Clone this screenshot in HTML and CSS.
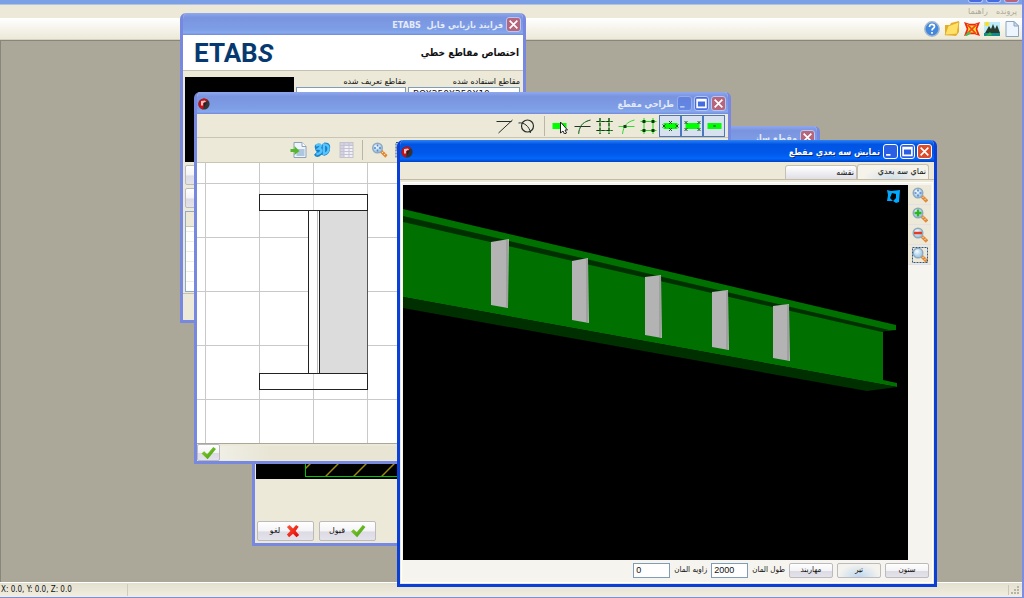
FILE: index.html
```html
<!DOCTYPE html>
<html lang="fa" dir="rtl">
<head>
<meta charset="utf-8">
<title>ETABS</title>
<link rel="stylesheet" href="styles.css">
</head>
<body>
<svg class="sprite" aria-hidden="true">
  <defs>
    <radialGradient id="lens" cx="40%" cy="35%"><stop offset="0" stop-color="#f4fcff"/><stop offset="1" stop-color="#a5cdea"/></radialGradient>
    <linearGradient id="greenTick" x1="0" y1="0" x2="1" y2="1"><stop offset="0" stop-color="#8ed03a"/><stop offset="1" stop-color="#3f9e05"/></linearGradient>
    <linearGradient id="redCross" x1="0" y1="0" x2="1" y2="1"><stop offset="0" stop-color="#ff5a3c"/><stop offset="1" stop-color="#e00000"/></linearGradient>
    <symbol id="app" viewBox="0 0 12 12"><circle cx="6" cy="6" r="5.6" fill="#333"/><path d="M6 .4a5.6 5.6 0 0 0-1 11.100L6 6 10 2A5.600 5.600 0 0 0 6 .4z" fill="#c80f16"/><path d="M3 3v4.500h2V5l3-1-1-1.500z" fill="#fff" opacity=".75"/><path d="M6 4.500h3L6 9z" fill="#222"/></symbol>
    <symbol id="mag" viewBox="0 0 16 16"><path d="M9.500 9l5.500 5.500" stroke="#e08a3a" stroke-width="3.400"/><path d="M10.500 11l1.500-1.500M12.500 13l1.500-1.500" stroke="#ffe0b0"/><circle cx="6" cy="6" r="4.800" fill="url(#lens)" stroke="#8fa9bd" stroke-width="1.400"/></symbol>
    <symbol id="magfit" viewBox="0 0 16 16"><use href="#mag"/><path d="M6 2.500v2M6 7.500v2M2.500 6h2M7.500 6h2" stroke="#5b80cc" stroke-width="1.600"/></symbol>
    <symbol id="magin" viewBox="0 0 16 16"><use href="#mag"/><path d="M6 2.500v7M2.500 6h7" stroke="#2fb61f" stroke-width="2.400"/></symbol>
    <symbol id="magout" viewBox="0 0 16 16"><use href="#mag"/><path d="M2 6h8" stroke="#e8391f" stroke-width="2.400"/></symbol>
    <symbol id="magwin" viewBox="0 0 16 16"><use href="#mag"/><path d="M.5.5h15v15H.5z" fill="none" stroke="#30548c" stroke-dasharray="2 1"/></symbol>
    <symbol id="tick" viewBox="0 0 18 16"><path d="M1 8.500L4 6l3.500 3.500L14.500 1 17.500 3.500 8 15z" fill="url(#greenTick)"/></symbol>
    <symbol id="cross" viewBox="0 0 16 16"><path d="M1 3.500L4 1l4 4 3.500-4 3 2L11 8l4 4.500-3 2.500-4-4-4.500 4L1 12l4-4z" fill="url(#redCross)"/></symbol>
    <symbol id="doc" viewBox="0 0 16 16"><path d="M2 .5h8L14.500 5v10.500H2z" fill="#edf6ff" stroke="#8aa5c2"/><path d="M10 .5V5h4.500z" fill="#c9def2" stroke="#8aa5c2"/></symbol>
    <symbol id="land" viewBox="0 0 16 16"><path d="M0 1h16v14H0z" fill="#bcebf9"/><circle cx="3" cy="3" r="2.300" fill="#ffdf23"/><path d="M1 12L5 5l2 3 2-5 2 5 2-4 3 8z" fill="#293b2e"/><path d="M0 12h16v3H0z" fill="#158a8c"/><path d="M2 15l4-4 2 3z" fill="#32b749"/></symbol>
    <symbol id="mesh" viewBox="0 0 18 16"><path d="M0 0l6 2h6l6-2-3 8 3 8-6-2H6l-6 2 3-8z" fill="#ef2712"/><path d="M3 2l4 2h5l3-2-2 6 2 6-3-2H7l-4 2 2-6z" fill="#ffe32b"/><path d="M4 3l9 10M14 3L4 13" stroke="#ef4b20" stroke-width="2"/><path d="M1 15l4-4 3 2-5 3z" fill="#43bd58"/></symbol>
    <symbol id="folder" viewBox="0 0 16 16"><path d="M1 4h5l1-2 8-2v11l-3 4-11-1z" fill="#e5ad26"/><path d="M1 14L4 5l11-4-2 12z" fill="#ffe168" stroke="#dba929" stroke-width=".7"/></symbol>
    <symbol id="help" viewBox="0 0 16 16"><circle cx="8" cy="8" r="7.200" fill="#4288dc" stroke="#a8b9cc" stroke-width="1.500"/><path d="M5.500 6c0-4 5-3 5-.5C10.500 7.500 8 7 8 9.500M8 11v1.800" fill="none" stroke="#fff" stroke-width="1.700"/></symbol>
    <symbol id="export" viewBox="0 0 16 16"><path d="M3.500.5h8l4 4v11h-12z" fill="#eff5fb" stroke="#8da2b8"/><path d="M6 7h8v7H6z" fill="#afc6df"/><path d="M11.500.5v4h4" fill="#fff" stroke="#8da2b8"/><path d="M0 7h4V4l5 5-5 4v-3H0z" fill="#56b72b"/></symbol>
    <symbol id="three" viewBox="0 0 18 16"><path d="M1 3q4-3 7 0l3-3q7 0 6 6 0 7-6 8l-3-1q-5 5-8 0l3-3Q0 7 1 3z" fill="#1583cc"/><path d="M2 3.500c5-3 7 0 3 3 4 0 4 5-2.500 6M10.500 2v10c6-1 7-10 0-10z" fill="none" stroke="#57c3fa" stroke-width="2.500"/></symbol>
    <symbol id="sheet" viewBox="0 0 16 16"><path d="M1 0h14v16H1z" fill="#c3c1d2"/><path d="M2 1h3v2H2zM6 1h4v2H6zM11 1h3v2h-3zM2 10h3v2H2zM2 4h3v2H2zM2 7h3v2H2zM2 13h3v2H2z" fill="#d4d3df"/><path d="M6 4h4v2H6zM11 4h3v2h-3zM6 7h4v2H6zM11 7h3v2h-3zM6 10h4v2H6zM11 10h3v2h-3zM6 13h4v2H6zM11 13h3v2h-3z" fill="#f1f1f8"/></symbol>
    <symbol id="bar1" viewBox="0 0 16 16"><path d="M1 5h14v6H1z" fill="#0f0"/><path d="M7 7l2 2M9 7L7 9" stroke="#063"/></symbol>
    <symbol id="bar4" viewBox="0 0 16 16"><path d="M1 5h14v6H1z" fill="#0f0"/><path d="M0 3l3 3M3 3L0 6M13 3l3 3M16 3l-3 3M0 10l3 3M3 10l-3 3M13 10l3 3M16 10l-3 3" stroke="#252"/></symbol>
    <symbol id="barm" viewBox="0 0 16 16"><path d="M1 5h14v6H1z" fill="#0f0"/><path d="M0 6.500l3 3M3 6.500l-3 3M13 6.500l3 3M16 6.500l-3 3M6.500 3l3 3M9.500 3l-3 3M6.500 10l3 3M9.500 10l-3 3" stroke="#252"/></symbol>
    <symbol id="gridsnap" viewBox="0 0 16 16"><path d="M3.500 0v16M12.500 0v16M0 3.500h16M0 12.500h16" stroke="#18d918"/><path d="M2 2h3v3H2zM11 2h3v3h-3zM2 11h3v3H2zM11 11h3v3h-3z" fill="#063b06"/></symbol>
    <symbol id="gridline" viewBox="0 0 16 16"><path d="M3.500 0v16M12.500 0v16M0 3.500h16M0 12.500h16" stroke="#18a018"/><path d="M3.500 0v16M12.500 0v16M0 3.500h16M0 12.500h16" stroke="#163016" stroke-dasharray="3 2"/></symbol>
    <symbol id="crosspt" viewBox="0 0 16 16"><path d="M0 8.500h16M4 16C5 8 8 4 16 2" fill="none" stroke="#32d832"/><path d="M5 7h3v3H5z" fill="#173f17"/></symbol>
    <symbol id="curve" viewBox="0 0 16 16"><path d="M0 8.500h16M4 16C5 8 8 4 16 2" fill="none" stroke="#24342a"/><path d="M4 16C5 8 8 4 16 2" fill="none" stroke="#29af29" stroke-dasharray="2 2"/></symbol>
    <symbol id="pick" viewBox="0 0 16 16"><path d="M0 5h14v6H0z" fill="#0f0"/><path d="M8 4v11l2.500-2 1.500 3 2-1-1.500-3H15z" fill="#fff" stroke="#222"/></symbol>
    <symbol id="tangent" viewBox="0 0 16 16"><circle cx="9" cy="8" r="6" fill="none" stroke="#262d29" stroke-width="1.200"/><path d="M0 5c5-1 11 3 12 10" fill="none" stroke="#262d29"/></symbol>
    <symbol id="angle" viewBox="0 0 16 16"><path d="M0 3.500h15M16 2L2 15" fill="none" stroke="#262d29"/></symbol>
  </defs>
</svg>

<div class="app">
  <header class="app-title"><button class="cap close" aria-label="بستن"></button><button class="cap" aria-label="بزرگ"></button><button class="cap" aria-label="کوچک"></button></header>
  <nav class="menu"><button>پرونده</button><button>راهنما</button></nav>
  <div class="main-tools">
    <button aria-label="جدید"><svg><use href="#doc"/></svg></button>
    <button aria-label="نما"><svg><use href="#land"/></svg></button>
    <button aria-label="مش"><svg><use href="#mesh"/></svg></button>
    <button aria-label="باز کردن"><svg><use href="#folder"/></svg></button>
    <button aria-label="کمک"><svg><use href="#help"/></svg></button>
  </div>
  <main class="desk"></main>
  <footer class="status"><span class="coords">X: 0.0, Y: 0.0, Z: 0.0</span><span class="cell"></span><svg class="grip" viewBox="0 0 8 8"><path d="M6 0h2v2H6zM3 3h2v2H3zM6 3h2v2H6zM0 6h2v2H0zM3 6h2v2H3zM6 6h2v2H6z" fill="#b8b4a2"/></svg></footer>
</div>

<section class="win import">
  <header class="bar"><button class="cap close" aria-label="بستن"><svg viewBox="0 0 10 10"><path d="M1.500 1.500l7 7M8.500 1.500l-7 7"/></svg></button><h2>فرايند بازيابي فايل &nbsp;ETABS</h2></header>
  <div class="body">
    <div class="banner"><strong>اختصاص مقاطع خطي</strong><span class="logo" dir="ltr">ETAB<i>S</i></span></div>
    <div class="import-grid">
      <div class="field"><label for="used">مقاطع استفاده شده</label><select id="used" dir="ltr"><option>BOX250X250X10</option></select></div>
      <div class="field"><label for="defined">مقاطع تعريف شده</label><input id="defined"></div>
      <div class="side">
        <div class="preview"></div>
        <button class="btn" aria-label="افزودن"></button>
        <button class="btn" aria-label="حذف"></button>
        <div class="list"><div class="list-head"></div></div>
      </div>
    </div>
    <div class="foot"></div>
  </div>
</section>

<section class="win maker">
  <header class="bar"><button class="cap close" aria-label="بستن"><svg viewBox="0 0 10 10"><path d="M1.500 1.500l7 7M8.500 1.500l-7 7"/></svg></button><h2>مقطع ساز</h2></header>
  <div class="body">
    <svg class="hatch"><defs><pattern id="diag" width="28" height="28" patternUnits="userSpaceOnUse" x="5" y="0"><path d="M0 28L28 0" stroke="#9a8a14" stroke-width="1.500"/></pattern></defs><rect x="48.500" y="-2" width="600" height="330.500" fill="url(#diag)" stroke="#00c800"/></svg>
    <div class="actions"><button class="btn"><svg><use href="#cross"/></svg><span>لغو</span></button><button class="btn"><svg><use href="#tick"/></svg><span>قبول</span></button></div>
  </div>
</section>

<section class="win design">
  <header class="bar"><button class="cap close" aria-label="بستن"><svg viewBox="0 0 10 10"><path d="M1.500 1.500l7 7M8.500 1.500l-7 7"/></svg></button><button class="cap" aria-label="بزرگ"><svg viewBox="0 0 10 10"><path d="M1 1.500h8v7H1zM1 2.500h8"/></svg></button><button class="cap dim" aria-label="کوچک"><svg viewBox="0 0 10 10"><path d="M1 8h4"/></svg></button><h2>طراحي مقطع</h2><svg class="app-icon"><use href="#app"/></svg></header>
  <div class="body">
    <div class="tools">
      <button class="on" aria-label="مرکز"><svg><use href="#bar1"/></svg></button>
      <button class="on" aria-label="گوشه"><svg><use href="#bar4"/></svg></button>
      <button class="on" aria-label="میانه"><svg><use href="#barm"/></svg></button>
      <button aria-label="نقاط شبکه"><svg><use href="#gridsnap"/></svg></button>
      <button aria-label="تقاطع"><svg><use href="#crosspt"/></svg></button>
      <button aria-label="شبکه"><svg><use href="#gridline"/></svg></button>
      <button aria-label="منحنی"><svg><use href="#curve"/></svg></button>
      <button aria-label="انتخاب"><svg><use href="#pick"/></svg></button>
      <span class="sep"></span>
      <button aria-label="مماس"><svg><use href="#tangent"/></svg></button>
      <button aria-label="عمود"><svg><use href="#angle"/></svg></button>
    </div>
    <div class="tools view">
      <button aria-label="پنجره"><svg><use href="#magwin"/></svg></button>
      <button aria-label="نمای کامل"><svg><use href="#magfit"/></svg></button>
      <span class="sep"></span>
      <button aria-label="جدول"><svg><use href="#sheet"/></svg></button>
      <button aria-label="سه بعدی"><svg><use href="#three"/></svg></button>
      <button aria-label="خروجی"><svg><use href="#export"/></svg></button>
    </div>
    <svg class="plan" shape-rendering="crispEdges">
      <defs><pattern id="cells" width="54" height="54" patternUnits="userSpaceOnUse" x="8" y="20"><path d="M.5 0v54M0 .5h54" stroke="#c9c9c9" fill="none"/></pattern></defs>
      <rect width="100%" height="100%" fill="url(#cells)"/>
      <rect x="122.500" y="47.500" width="48" height="163" fill="#dcdcdc" stroke="#555"/>
      <rect x="111.500" y="47.500" width="11" height="163" fill="#fff" stroke="#222"/><path d="M120.500 48v163" stroke="#bbb"/>
      <rect x="62.500" y="31.500" width="108" height="16" fill="#fff" stroke="#222"/>
      <rect x="62.500" y="210.500" width="108" height="16" fill="#fff" stroke="#222"/>
      <path d="M116.500 32v15M116.500 211v15" stroke="#d8d8d8"/>
    </svg>
    <div class="confirm"><div class="track"></div><button class="btn" aria-label="تایید"><svg><use href="#tick"/></svg></button></div>
  </div>
</section>

<section class="win scene active">
  <header class="bar"><button class="cap close" aria-label="بستن"><svg viewBox="0 0 10 10"><path d="M1.500 1.500l7 7M8.500 1.500l-7 7"/></svg></button><button class="cap" aria-label="بزرگ"><svg viewBox="0 0 10 10"><path d="M1 1.500h8v7H1zM1 2.500h8"/></svg></button><button class="cap" aria-label="کوچک"><svg viewBox="0 0 10 10"><path d="M1 8h4"/></svg></button><h2>نمايش سه بعدي مقطع</h2><svg class="app-icon"><use href="#app"/></svg></header>
  <div class="body">
    <div class="tabs"><button class="tab current">نماي سه بعدي</button><button class="tab">نقشه</button></div>
    <div class="page">
      <div class="stage">
        <div class="zooms">
          <button aria-label="نمای کامل"><svg><use href="#magfit"/></svg></button>
          <button aria-label="بزرگنمایی"><svg><use href="#magin"/></svg></button>
          <button aria-label="کوچک نمایی"><svg><use href="#magout"/></svg></button>
          <button aria-label="پنجره"><svg><use href="#magwin"/></svg></button>
        </div>
        <svg class="beam" viewBox="403 185 505 375" preserveAspectRatio="xMidYMid slice">
          <path d="M403 209L896 325v5L883 331v49l14 3v4L403 297z" fill="#007000"/>
          <path d="M403 216L889 330 882 332 403 222z" fill="#003000"/>
          <path d="M403 297L897 387 867 391 403 308z" fill="#003000"/>
          <g fill="#b3b3b3"><path d="M491 242l18-3-1 69-17-3z"/><path d="M572 261l16-3 1 65-17-3z"/><path d="M645 277l16-2 1 63-17-3z"/><path d="M712 292l16-2 1 60-17-3z"/><path d="M773 306l16-2 1 57-17-3z"/></g>
          <path d="M507 240v67M587 259v63M660 276v61M727 291v58M788 305v55" stroke="#a0a0a0" stroke-width="2"/>
          <path d="M887 190l4 1 9-1-1 12-3 1-3-2h-6l1-6zM892 193l-2 5 3 3 3-3v-4z" fill="#00a8ff" fill-rule="evenodd"/>
        </svg>
      </div>
      <form class="controls">
        <button type="button" class="btn">ستون</button>
        <button type="button" class="btn sel">تير</button>
        <button type="button" class="btn">مهاربند</button>
        <label for="len">طول المان</label><input id="len" dir="ltr" value="2000">
        <label for="ang">زاويه المان</label><input id="ang" dir="ltr" value="0">
      </form>
    </div>
  </div>
</section>
</body>
</html>
```
FILE: styles.css
```css
* { box-sizing: border-box; }
body { margin: 0; position: relative; height: 100vh; overflow: hidden; font: 9px/12px "DejaVu Sans", sans-serif; color: #111; }
button, input, select { font: inherit; color: inherit; margin: 0; }
button { padding: 0; border: 0; background: none; }
.sprite { position: absolute; width: 0; height: 0; }

.app { display: flex; flex-direction: column; min-height: 100vh; background: #ece9d8; border-right: 2px solid #7b8ee2; border-bottom: 1px solid #7b8ee2; }
.app-title { display: flex; gap: 3px; height: 5px; padding: 0 3px; background: #7ba0e6; border-bottom: 1px solid #b4c0e4; overflow: hidden; }
.app-title .cap { height: 3px; border-top: 0; border-radius: 0 0 3px 3px; }
.menu { display: flex; gap: 8px; height: 13px; padding: 0 5px; color: #aca899; font-size: 8px; }
.main-tools { display: flex; gap: 4px; align-items: center; height: 22px; padding: 0 2px; background: linear-gradient(#fff, #ece9d8); border-bottom: 1px solid #d6d2c2; }
.main-tools svg { display: block; width: 16px; height: 16px; }
.desk { flex: 1; background: #aba899; border: 1px solid #88867a; border-width: 1px 0 0 1px; }
.status { display: flex; flex-direction: row-reverse; align-items: center; height: 15px; padding: 0 1px; border-top: 1px solid #fff; background: linear-gradient(#e4e0d0, #f1eee0); font: 8px/12px "DejaVu Sans Condensed", "DejaVu Sans", sans-serif; }
.coords { width: 127px; direction: ltr; border-right: 1px solid #d0ccbb; }
.cell { flex: 1; border-right: 1px solid #cbc7b8; height: 10px; }
.grip { width: 8px; height: 8px; margin: 2px; }

.win { position: absolute; display: flex; flex-direction: column; background: #ece9d8; border: 3px solid #7788e0; border-top: 0; border-radius: 6px 6px 0 0; overflow: hidden; }
.import { left: 180px; top: 13px; width: 346px; height: 310px; }
.maker { left: 252px; top: 126px; width: 568px; height: 420px; }
.design { left: 194px; top: 92px; width: 537px; height: 372px; }
.scene { left: 397px; top: 140px; width: 540px; height: 447px; }
.active { border-color: #0a3fd8; }
.bar { display: flex; align-items: center; gap: 2px; height: 22px; padding: 1px 2px 0 0; color: #e4eafa; background: linear-gradient(#8fa8ee, #7a94df 20%, #7e9ee6 75%, #86a9ee 90%, #7488d8); }
.active .bar { color: #fff; background: linear-gradient(#2c82f5, #0054e3 20%, #0058ea 60%, #0367fc 85%, #0040c0); }
.bar h2 { flex: 1; margin: 0 1px 0 0; font: bold 9px/16px "DejaVu Sans Condensed", "DejaVu Sans", sans-serif; }
.active h2 { text-shadow: 1px 1px #0a2b80; }
.app-icon { width: 12px; height: 12px; margin-left: 1px; }
.design .app-icon { margin-left: 1px; }
.active .app-icon { margin-left: 1px; }
.cap { flex: none; width: 15px; height: 15px; border: 1px solid #b9c6f4; border-radius: 3px; background: #466be0; display: grid; place-items: center; }
.cap svg { width: 11px; height: 11px; fill: none; stroke: #fff; }
.cap path { stroke-width: 1.5; }
.cap.dim { opacity: .45; }
.cap.close { background: #b6667c; }
.active .cap { border-color: #fff; background: #2c60e4; }
.active .cap.close { background: #dd4c2a; }
.body { flex: 1; display: flex; flex-direction: column; min-height: 0; }

.btn { border: 1px solid #bdbabd; border-radius: 2px; background: linear-gradient(#fff, #f4f3f6 50%, #dcdae3 55%, #e4e2ea); }
.banner { display: flex; justify-content: space-between; align-items: center; height: 36px; padding: 0 4px 0 11px; background: #fff; border-bottom: 1px solid #c4c1b4; }
.banner strong { font: bold 10px/16px "DejaVu Sans Condensed", "DejaVu Sans", sans-serif; }
.logo { font: bold 26px/32px Roboto, sans-serif; color: #063970; }
.import-grid { display: grid; grid-template-columns: 112px 110px 1fr; gap: 2px; padding: 5px 3px 0 2px; height: 221px; }
.field label { display: block; height: 11px; line-height: 12px; font-size: 8px; }
.field input, .field select { display: block; width: 100%; height: 18px; padding: 0 2px; border: 1px solid #7f9db9; background: #fff; }
.field select { padding: 0 0 8px; font: 9px/9px "DejaVu Sans", sans-serif; }
.side { display: flex; flex-direction: column; gap: 3px; margin-top: 1px; }
.preview { height: 85px; background: #000; }
.side .btn { height: 20px; }
.list { flex: 1; border: 1px solid #8fa9c8; background: repeating-linear-gradient(#fff 0 9px, #f1ecdd 9px 10px); }
.list-head { height: 15px; background: #ece9d8; border-bottom: 1px solid #c8c5b5; }
.foot { flex: 1; margin-top: 1px; border-top: 1px solid #c4c1b4; }

.hatch { display: block; width: 100%; height: 331px; padding: 0 1px; background: #000; border-left: 1px solid #ece9d8; }
.actions { display: flex; direction: ltr; gap: 5px; margin: auto 2px 2px; }
.actions .btn { display: flex; flex-direction: row-reverse; align-items: center; justify-content: center; gap: 5px; width: 57px; height: 20px; font-size: 8px; }
.actions svg { width: 16px; height: 14px; }

.tools { display: flex; align-items: center; height: 24px; padding: 0 3px; border-bottom: 1px solid #c8c5b5; }
.tools button { width: 22px; height: 22px; display: grid; place-items: center; }
.tools button.on { background: #d8e1f0; border: 1px solid #4a78bc; }
.tools svg { width: 17px; height: 16px; }
.sep { width: 1px; height: 20px; margin: 0 4px 0 7px; background: #b9b6a6; }
.view { justify-content: flex-end; height: 25px; gap: 2px; padding-left: 90px; }
.view .sep { margin: 0 3px; }
.plan { display: block; width: 100%; flex: 1; min-height: 0; background: #fff; }
.confirm { display: flex; align-items: center; height: 18px; border-top: 1px solid #aaa798; }
.confirm .btn { width: 23px; height: 17px; display: grid; place-items: center; }
.confirm svg { width: 17px; height: 14px; }
.track { flex: 1; height: 14px; background: linear-gradient(90deg, #f0efe6, #e8e5d4 10%); }

.tabs { display: flex; align-items: flex-end; height: 18px; padding: 0 5px; border-bottom: 1px solid #c4b9a5; }
.tab { width: 72px; height: 14px; padding: 0 2px; text-align: right; font-size: 8px; border: 1px solid #c4c1b4; border-bottom: 0; border-radius: 3px 3px 0 0; background: linear-gradient(#fff, #e0dee6); }
.tab.current { height: 15px; background: radial-gradient(ellipse at bottom, #cfe0ee, #f5f3ea 60%); }
.page { flex: 1; display: flex; flex-direction: column; min-height: 0; margin: 2px 1px 1px; padding: 2px 1px; background: #f5f4ee; border: 1px solid #fff; }
.stage { flex: 1; display: flex; min-height: 0; }
.zooms { width: 23px; }
.zooms button { display: grid; place-items: center; width: 23px; height: 20px; background: #ece9d8; border-bottom: 1px solid #e2dfea; }
.zooms svg { width: 16px; height: 16px; }
.beam { display: block; flex: 1; min-width: 0; background: #000; }
.controls { display: flex; align-items: center; gap: 4px; height: 20px; padding-right: 2px; font: 8px/12px "DejaVu Sans Condensed", "DejaVu Sans", sans-serif; }
.controls .btn { width: 44px; height: 15px; }
.controls .sel { background: radial-gradient(ellipse at bottom, #bdd7f0, #f4f3ee 70%); }
.controls input { width: 37px; height: 15px; padding: 0 2px; border: 1px solid #7f9db9; background: #fff; font: 9px/12px "Liberation Sans", sans-serif; }
```
